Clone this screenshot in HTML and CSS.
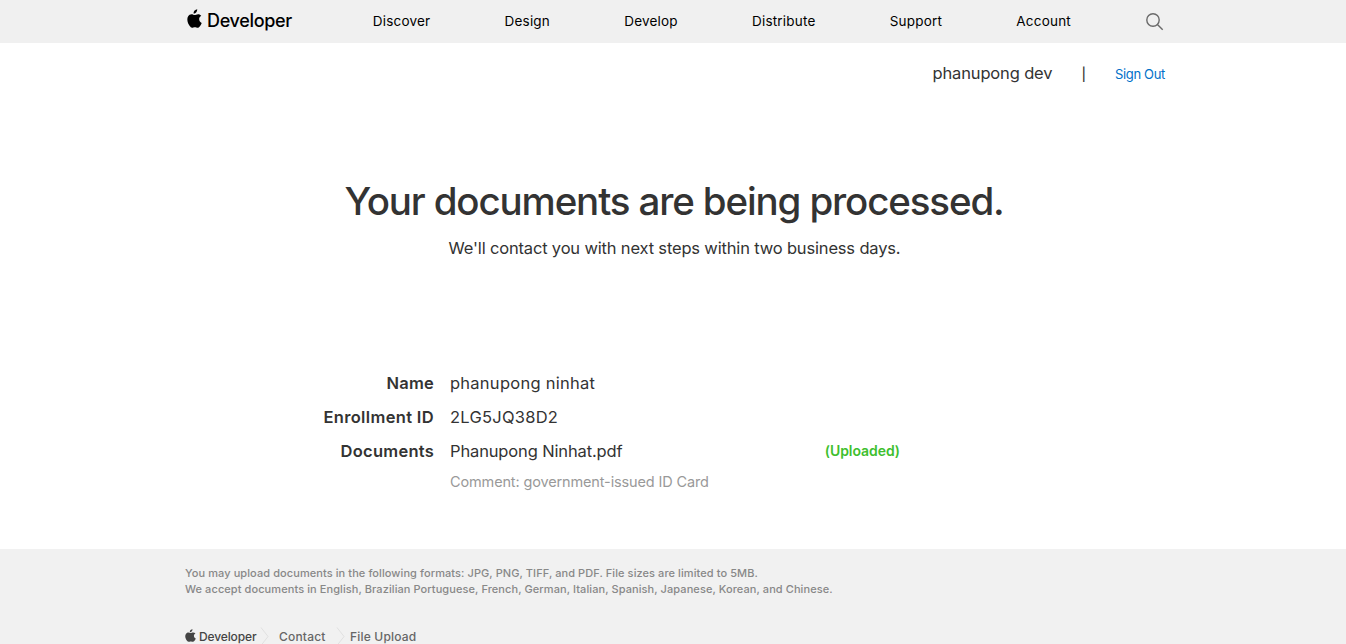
FILE: index.html
```html
<!DOCTYPE html>
<html lang="en">
<head>
<meta charset="utf-8">
<title>File Upload - Apple Developer</title>
<link rel="stylesheet" href="styles.css">
</head>
<body>
<svg width="0" height="0" class="defs" aria-hidden="true">
  <symbol id="apple" viewBox="0 0 16 20">
    <path d="M10.9 0.2c.15 1.2-.35 2.4-1 3.2-.7.85-1.8 1.5-2.85 1.4-.15-1.15.4-2.35 1.05-3.1C8.8.9 10 .25 10.9.2zM15.2 7.1c-1.6 1-2.3 2.2-2.2 3.8.1 1.8 1 3 2.7 3.8-.5 1.4-1.1 2.4-1.9 3.4-.7.9-1.4 1.6-2.4 1.6-1.1 0-1.6-.6-3-.6s-2 .6-3 .6-1.800-.8-2.500-1.700C.7 15.200-.5 10.800 1.100 8c.9-1.600 2.300-2.500 3.800-2.500 1.300 0 2.300.8 3.300.8.9 0 2-.9 3.700-.9 1.300 0 2.500.6 3.300 1.700z"/>
  </symbol>
</svg>
<header class="nav">
  <div class="nav-inner">
    <a class="brand"><svg class="brand-icon" viewBox="0 0 16 20" preserveAspectRatio="none"><use href="#apple" width="16" height="20"/></svg><span class="brand-text">Developer</span></a>
    <nav class="links">
      <a>Discover</a><a>Design</a><a>Develop</a><a>Distribute</a><a>Support</a><a>Account</a>
    </nav>
    <svg class="search" viewBox="0 0 18 18"><circle cx="7" cy="7" r="6.200"/><path d="M11.400 11.400L16.700 16.700"/></svg>
  </div>
</header>
<div class="user"><span class="user-name">phanupong dev</span><span class="bar">|</span><a class="signout">Sign Out</a></div>
<main>
  <h1>Your documents are being processed.</h1>
  <p class="intro">We'll contact you with next steps within two business days.</p>
  <dl class="details">
    <dt>Name</dt><dd>phanupong ninhat</dd>
    <dt class="enrollment">Enrollment ID</dt><dd>2LG5JQ38D2</dd>
    <dt>Documents</dt>
    <dd class="doc"><span class="file">Phanupong Ninhat.pdf</span><strong>(Uploaded)</strong></dd>
  </dl>
  <p class="comment">Comment: government-issued ID Card</p>
</main>
<footer>
  <div class="footer-inner">
    <p>You may upload documents in the following formats: JPG, PNG, TIFF, and PDF. File sizes are limited to 5MB.</p>
    <p>We accept documents in English, Brazilian Portuguese, French, German, Italian, Spanish, Japanese, Korean, and Chinese.</p>
    <div class="crumbs">
      <svg class="crumb-icon" viewBox="0 0 16 20" preserveAspectRatio="none"><use href="#apple" width="16" height="20"/></svg><span class="crumb-brand">Developer</span>
      <svg class="chev" viewBox="0 0 9 20"><path d="M1 0.500L8 9.500L1 18.500"/></svg>
      <a class="c1">Contact</a>
      <svg class="chev" viewBox="0 0 9 20"><path d="M1 0.500L8 9.500L1 18.500"/></svg>
      <a class="c2">File Upload</a>
    </div>
  </div>
</footer>
</body>
</html>
```
FILE: styles.css
```css
* { box-sizing: border-box; }
html, body { height: 100%; overflow: hidden; }
body {
  margin: 0;
  background: #fff;
  color: #333;
  font-family: Inter, "Liberation Sans", sans-serif;
  font-size: 17px;
  display: flex;
  flex-direction: column;
}
h1, p, dl, dd { margin: 0; }
.defs { position: absolute; }

.nav { background: #f0f0f0; height: 43px; flex: none; color: #000; }
.nav-inner { width: 980px; height: 43px; margin: 0 auto; padding: 0 0 0 4px; display: flex; align-items: center; }
.brand { display: flex; align-items: center; width: 186px; }
.brand-icon { width: 15px; height: 19px; margin: -6px 5px 0 0; }
.brand-text { font-size: 18px; font-weight: 500; letter-spacing: -0.32px; line-height: 22px; margin-top: -1px; }
.links { display: flex; justify-content: space-between; width: 699px; font-size: 13.5px; letter-spacing: 0.2px; line-height: 20px; margin-top: -1px; }
.search { width: 18px; height: 18px; margin-left: 75px; margin-right: -1px; flex: none; fill: none; stroke: #6a6a6a; stroke-width: 1.400; }

.user { width: 980px; margin: 0 auto 73px; height: 60px; flex: none; display: flex; justify-content: flex-end; align-items: baseline; padding: 18px 0 0; line-height: 24px; }
.user-name { font-size: 16.5px; letter-spacing: -0.15px; }
.bar { margin: 0 29px 0 29px; font-size: 13px; font-weight: 500; }
.signout { font-size: 13px; color: #0070c9; letter-spacing: -0.32px; margin-right: -2px; }

main { flex: none; height: 373px; }
h1 { font-size: 38.5px; font-weight: 450; line-height: 50px; text-align: center; letter-spacing: -1.140px; padding-left: 2px; }
.intro { font-size: 16.5px; text-align: center; line-height: 26px; margin-top: 9px; letter-spacing: -0.17px; padding-left: 3px; }
.details { width: 577px; margin: 105px 0 0 323px; display: grid; grid-template-columns: 111px 1fr; column-gap: 16px; font-size: 16.5px; letter-spacing: 0.25px; line-height: 34px; }
dt { font-weight: 600; text-align: right; white-space: nowrap; }
.enrollment { letter-spacing: 0.34px; }
.doc { display: flex; justify-content: space-between; }
.file { letter-spacing: -0.14px; }
.doc strong { color: #3fbf2f; font-size: 14px; font-weight: 600; letter-spacing: -0.05px; }
.comment { margin: 4px 0 0 450px; font-size: 14.5px; line-height: 20px; color: #999; letter-spacing: -0.14px; }

footer { background: #f1f1f1; flex: 1; overflow: hidden; }
.footer-inner { width: 978px; margin: 0 auto; padding: 16px 0 0 1px; font-size: 11px; font-weight: 500; line-height: 16px; letter-spacing: 0.082px; color: #888; }
.crumbs { display: flex; align-items: center; height: 20px; margin-top: 30px; font-size: 12px; color: #666; }
.crumb-icon { width: 11px; height: 13px; fill: #444; margin: -3px 3px 0 0; flex: none; }
.crumb-brand { color: #444; letter-spacing: -0.12px; width: 61px; }
.chev { width: 9px; height: 20px; fill: none; stroke: #e0e0e0; flex: none; }
.c1 { margin-left: 10px; width: 57px; letter-spacing: 0.2px; }
.c2 { margin-left: 5px; letter-spacing: 0.2px; }
```
